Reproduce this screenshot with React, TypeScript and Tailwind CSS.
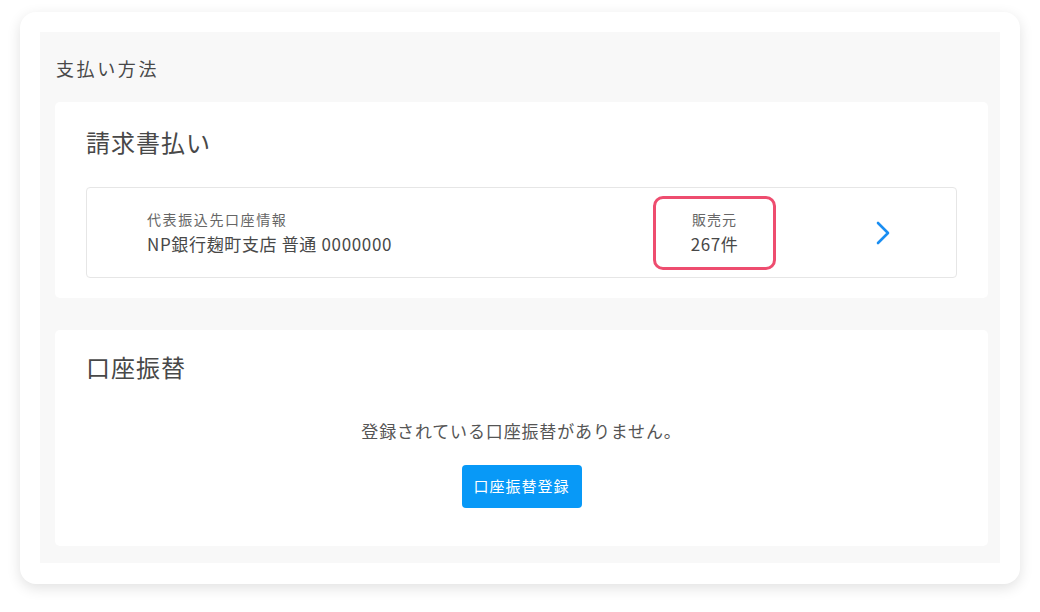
import React from "react";

const font = { fontFamily: '"Noto Sans CJK JP", "Noto Sans", sans-serif' };

const ChevronRight = () => (
    <svg width="18" height="26" viewBox="0 0 18 26" fill="none">
        <path d="M4 3 L14 13 L4 23" stroke="#1a8ef2" strokeWidth="2.6" strokeLinecap="round" strokeLinejoin="round" />
    </svg>
);

const App = () => {
    return (
        <div className="w-[1040px] h-[612px] bg-white pt-3 px-5" style={font}>
            <div className="w-[1000px] h-[572px] bg-white rounded-2xl shadow-[0_4px_14px_rgba(0,0,0,0.12)] p-5 pb-[21px]">
                <div className="h-full bg-[#f8f8f8] pl-[15px] pr-[12px] pt-[22px] pb-[17px] flex flex-col">
                    <h1 className="text-[18px] leading-[28px] tracking-[2.6px] text-[#484848] ml-[1px]">支払い方法</h1>

                    {/* invoice payment */}
                    <section className="mt-[20px] bg-white rounded-[5px] h-[196px] pl-[31px] pr-[31px] pt-[22px]">
                        <h2 className="text-[24px] leading-[36px] tracking-[1px] text-[#484848]">請求書払い</h2>
                        <div className="mt-[27px] h-[91px] border border-[#e6e6e6] rounded-[4px] flex items-center pl-[60px] pr-[64px]">
                            <div className="flex-1 flex flex-col">
                                <span className="text-[14px] leading-[22px] tracking-[1.6px] text-[#666]">代表振込先口座情報</span>
                                <span className="text-[17px] leading-[28px] tracking-[0.65px] text-[#484848]">NP銀行麹町支店 普通 0000000</span>
                            </div>
                            <div className="w-[123px] h-[74px] border-[3.5px] border-[#ee4d6f] rounded-[10px] flex flex-col items-center justify-center mr-[98px]">
                                <span className="text-[14px] leading-[22px] tracking-[1px] text-[#666]">販売元</span>
                                <span className="text-[17px] leading-[28px] tracking-[0.5px] text-[#484848]">267件</span>
                            </div>
                            <ChevronRight />
                        </div>
                    </section>

                    {/* bank transfer */}
                    <section className="mt-[32px] bg-white rounded-[5px] h-[216px] pl-[31px] pr-[31px] pt-[19px]">
                        <h2 className="text-[24px] leading-[36px] tracking-[1px] text-[#484848]">口座振替</h2>
                        <div className="flex flex-col items-center">
                            <p className="mt-[32px] text-[17px] leading-[28px] tracking-[0.85px] text-[#555]">登録されている口座振替がありません。</p>
                            <button className="mt-[20px] w-[120px] h-[43px] bg-[#0899f7] rounded-[4px] text-white text-[15px] tracking-[1px]">
                                口座振替登録
                            </button>
                        </div>
                    </section>
                </div>
            </div>
        </div>
    );
};

export default App;
